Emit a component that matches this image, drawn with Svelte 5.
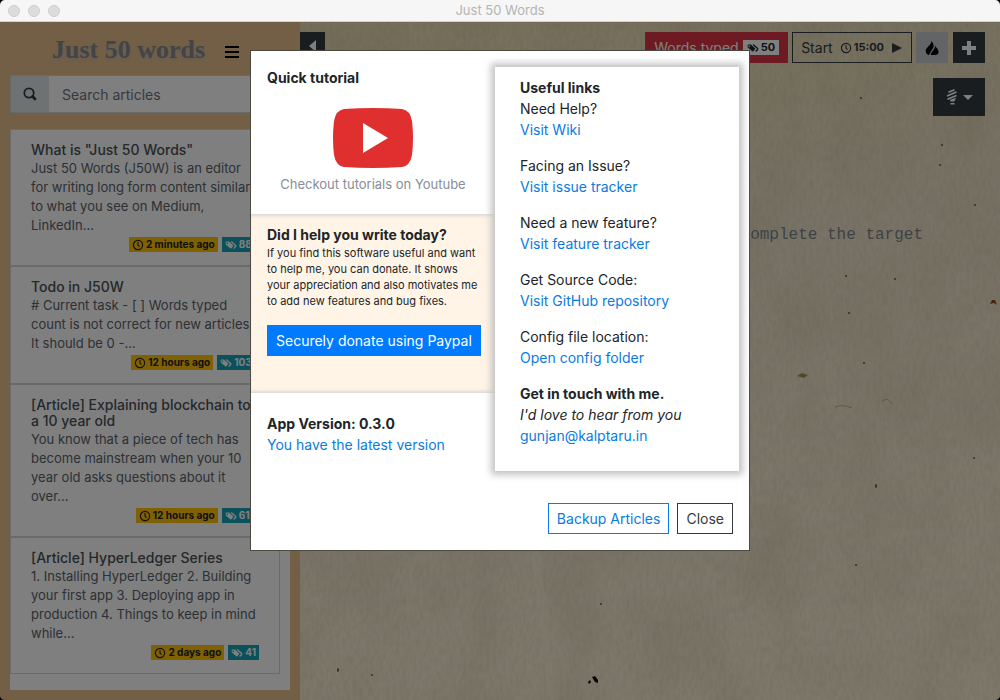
<script>
  const articles = [
    { title: 'What is "Just 50 Words"', text: 'Just 50 Words (J50W) is an editor for writing long form content similar to what you see on Medium, LinkedIn...', when: '2 minutes ago', words: '881' },
    { title: 'Todo in J50W', text: '# Current task - [ ] Words typed count is not correct for new articles. It should be 0 -...', when: '12 hours ago', words: '1031' },
    { title: '[Article] Explaining blockchain to a 10 year old', text: 'You know that a piece of tech has become mainstream when your 10 year old asks questions about it over...', when: '12 hours ago', words: '616' },
    { title: '[Article] HyperLedger Series', text: '1. Installing HyperLedger 2. Building your first app 3. Deploying app in production 4. Things to keep in mind while...', when: '2 days ago', words: '41' }
  ];
  const links = [
    ['Need Help?', 'Visit Wiki'],
    ['Facing an Issue?', 'Visit issue tracker'],
    ['Need a new feature?', 'Visit feature tracker'],
    ['Get Source Code:', 'Visit GitHub repository'],
    ['Config file location:', 'Open config folder']
  ];
  const specks = [
    [942, 145, 1], [940, 165, 1], [975, 205, 1], [846, 276, 1], [895, 279, 1], [849, 313, 1], [864, 363, 1],
    [601, 604, 1], [856, 565, 1], [338, 670, 2], [372, 675, 1], [974, 458, 1], [876, 486, 2], [861, 98, 1]
  ];
</script>

{#snippet clock()}
  <svg class="ico" viewBox="0 0 12 12" aria-hidden="true"><circle cx="6" cy="6" r="4.6" fill="none" stroke="currentColor" stroke-width="1.2" /><path d="M6 3v3.2l1.6 1.4" fill="none" stroke="currentColor" stroke-width="1.1" /></svg>
{/snippet}
{#snippet tags()}
  <svg class="ico" viewBox="0 0 12 12" aria-hidden="true"><path fill="currentColor" fill-rule="evenodd" d="M.6 3.1Q.8 2.4 1.5 2.4H4L8 6.2Q8.5 6.8 8 7.3L6.3 9.3Q5.8 9.8 5.2 9.3L.8 5.5ZM2.2 3.4a.8.8 0 1 0 .1 0Z" /><path d="M6.2 2.6 10.6 6.4Q11 7 10.6 7.5L8.600 9.5" fill="none" stroke="currentColor" stroke-width="1.3" /></svg>
{/snippet}

<div class="window">
  <header class="titlebar">
    <div class="lights"><span></span><span></span><span></span></div>
    <span>Just 50 Words</span>
  </header>

  <div class="body">
    <aside>
      <div class="brand">
        <h1>Just 50 words</h1>
        <button class="menu" aria-label="Menu"><svg width="14" height="14" viewBox="0 0 14 14"><path d="M0 2h14M0 7h14M0 12h14" stroke="#000" stroke-width="2" /></svg></button>
      </div>
      <div class="search">
        <button aria-label="Search"><svg width="14" height="14" viewBox="0 0 14 14"><circle cx="6" cy="6" r="4.7" fill="none" stroke="#343a40" stroke-width="1.8" /><path d="M9.6 9.6 12 12" stroke="#343a40" stroke-width="2.8" stroke-linecap="round" /></svg></button>
        <input type="text" placeholder="Search articles" aria-label="Search articles" />
      </div>
      <div class="list">
        {#each articles as a}
          <article>
            <h2>{a.title}</h2>
            <p>{a.text}</p>
            <div class="meta">
              <span class="badge warn">{@render clock()}{a.when}</span>
              <span class="badge info">{@render tags()}{a.words}</span>
            </div>
          </article>
        {/each}
      </div>
    </aside>

    <main>
      <svg class="paper" aria-hidden="true" width="100%" height="100%">
        <filter id="blotch" x="0" y="0" width="100%" height="100%">
          <feTurbulence type="fractalNoise" baseFrequency="0.02 0.012" numOctaves="3" seed="8" />
          <feColorMatrix values="0 0 0 0 .42  0 0 0 0 .32  0 0 0 0 .2  .25 0 0 0 -.08" />
        </filter>
        <filter id="grain" x="0" y="0" width="100%" height="100%">
          <feTurbulence type="fractalNoise" baseFrequency="0.3 0.12" numOctaves="3" seed="4" />
          <feColorMatrix values="0 0 0 0 .35  0 0 0 0 .3  0 0 0 0 .18  .26 0 0 0 -.08" />
        </filter>
        <rect width="100%" height="100%" filter="url(#blotch)" />
        <rect width="100%" height="100%" filter="url(#grain)" />
        <g transform="translate(-300 -22)">
          {#each specks as [x, y, r]}<ellipse cx={x} cy={y} rx="1" ry={r} fill="#6b5c3c" />{/each}
          <path d="m592 677 3-1 3 4v3l-3-1ZM588 682l2-2 1 2-2 2Z" fill="#0a0a05" />
          <path d="m990 304 2-4h3l2 5-3-2Z" fill="#8c4a22" />
          <path d="m797 376 5-3 6 2-4 3Z" fill="#a5904f" />
          <path d="m882 401 5-2 6 5M835 407q8-3 17 1" fill="none" stroke="#c0aa90" />
          <path d="M535 550q8 65 18 150" fill="none" stroke="#fffbe0" stroke-width="8" opacity=".2" />
        </g>
      </svg>
      <div class="toolbar">
        <button class="dark collapse" aria-label="Collapse sidebar"><svg width="8" height="14" viewBox="0 0 8 14"><path d="M7 1v12L0 7Z" fill="currentColor" /></svg></button>
        <div class="tools">
          <button class="typed">Words typed <span class="count">{@render tags()}50</span></button>
          <button class="start">Start <span class="time">{@render clock()}15:00</span><svg width="12" height="12" viewBox="0 0 12 12"><path d="M1 1v10L11 6Z" fill="currentColor" /></svg></button>
          <button class="fire" aria-label="Burn mode"><svg width="16" height="16" viewBox="0 0 16 16"><path d="M7.2 1C8 5 1.7 7 1.7 11c0 2.3 1.4 3.7 3.2 4L9.6 7C9.8 4 8.6 2 7.2 1ZM11.2 5.5C12 8 14.6 9 14.6 12c0 2-1.6 3-3.6 3H6.600C7.4 11.5 11.2 9.5 11.2 5.5Z" fill="#000" /></svg></button>
          <button class="dark plus" aria-label="New article"><svg width="14" height="14" viewBox="0 0 14 14"><path d="M7 0v14M0 7h14" stroke="currentColor" stroke-width="4" /></svg></button>
        </div>
      </div>
      <button class="dark bulb" aria-label="Theme">
        <svg width="12" height="16" viewBox="0 0 12 16"><path d="M2.5 3.2 8.5 .8M1 7 10.5 3M1.5 10.2 10.5 6.4" stroke="currentColor" stroke-width="1.6" /><path d="M3.5 11 10 8.8 9 11.2 8 12.5H5.2ZM4.5 14h4v1.6h-4Z" fill="currentColor" /></svg>
        <svg width="10" height="5" viewBox="0 0 10 5"><path d="M0 0h10L5 5Z" fill="currentColor" /></svg>
      </button>
      <p class="target">complete the target</p>
    </main>
  </div>

  <div class="backdrop">
    <div class="dialog" role="dialog" aria-modal="true" aria-label="About Just 50 Words">
      <div class="columns">
        <div class="left">
          <section class="tutorial">
            <h3>Quick tutorial</h3>
            <a href="#youtube">
              <svg width="80" height="60" viewBox="0 0 80 60"><path d="M11 1Q40-1 69 1Q77 2 79 13Q81 30 79 47Q77 58 69 59Q40 61 11 59Q3 58 1 47Q-1 30 1 13Q3 2 11 1Z" fill="#e02f2f" /><path d="M30 15v30l25-15Z" fill="#fff" /></svg>
              Checkout tutorials on Youtube
            </a>
          </section>
          <section class="donate">
            <h3>Did I help you write today?</h3>
            <p>If you find this software useful and want to help me, you can donate. It shows your appreciation and also motivates me to add new features and bug fixes.</p>
            <button>Securely donate using Paypal</button>
          </section>
          <section class="version">
            <h3>App Version: 0.3.0</h3>
            <a href="#version">You have the latest version</a>
          </section>
        </div>
        <div class="links">
          <h3>Useful links</h3>
          {#each links as [label, text]}
            <div class="entry">{label}<a href="#link">{text}</a></div>
          {/each}
          <h3>Get in touch with me.</h3>
          <em>I'd love to hear from you</em>
          <a href="#mail">gunjan@kalptaru.in</a>
        </div>
      </div>
      <footer>
        <button class="backup">Backup Articles</button>
        <button class="close">Close</button>
      </footer>
    </div>
  </div>
</div>

<style>
  :global(body) { margin: 0; background: #000; }
  .window, .window * { box-sizing: border-box; }
  .window { position: relative; display: flex; flex-direction: column; height: 100vh; overflow: hidden; border-radius: 5px; font: 14px/21px Inter, sans-serif; color: #212529; }
  button, input { font: inherit; color: inherit; border: 0; border-radius: 0; margin: 0; padding: 0; }
  h1, h2, h3, p { margin: 0; }
  a { color: #0a7be0; text-decoration: none; }
  .titlebar { position: relative; z-index: 3; flex: none; display: grid; place-items: center; height: 22px; background: #f6f6f6; border-bottom: 1px solid #d1d1d1; color: #b4b4b4; font-size: 13px; }
  .lights { position: absolute; left: 8px; top: 5px; display: flex; gap: 8px; }
  .lights span { width: 12px; height: 12px; border-radius: 50%; background: #dcdcdc; border: 1px solid #cecece; }
  .body { flex: 1; display: flex; min-height: 0; }
  aside { width: 300px; flex: none; display: flex; flex-direction: column; background: #e6be8c; padding: 10px; }
  .brand { display: flex; align-items: center; gap: 20px; padding: 0 0 8px 42px; height: 43px; flex: none; }
  h1 { font: 700 26px/36px "Liberation Serif", serif; color: #888; text-shadow: 0 2px 3px #bbb; white-space: nowrap; }
  .menu { background: none; display: flex; padding-top: 4px; }
  .search { display: flex; flex: none; height: 38px; border: 1px solid #ced4da; }
  .search button { width: 38px; background: #dfe4e6; display: grid; place-items: center; }
  .search input { flex: 1; min-width: 0; padding: 0 13px; background: #fff; }
  .search input::placeholder { color: #6c757d; opacity: 1; }
  .list { flex: 1; min-height: 0; margin-top: 16px; background: #fff; overflow: hidden; padding-right: 10px; }
  article { border: 1px solid #d5d5d5; padding: 12px 20px 13px; }
  h2 { font-size: 14px; line-height: 16px; font-weight: 500; color: #495057; padding-bottom: 1px; }
  article p { font-size: 13px; line-height: 19px; color: #5a6268; }
  .meta { display: flex; justify-content: flex-end; gap: 4px; padding-top: 2px; }
  .badge, .count, .time { display: inline-flex; align-items: center; gap: 2px; font-size: 10px; line-height: 15px; font-weight: 700; }
  .badge { padding: 0 3px; }
  .warn { background: #ffc107; }
  .info { background: #17a2b8; color: #fff; }
  .ico { width: 12px; height: 12px; flex: none; }
  main { position: relative; flex: 1; min-width: 0; background: linear-gradient(170deg, #eee0b6, #f0e6cc 35%, #fbf3d8); }
  .paper { position: absolute; inset: 0; }
  .toolbar, .bulb, .target { position: relative; }
  .toolbar { display: flex; justify-content: space-between; padding: 10px 15px 0 0; }
  .tools { display: flex; gap: 4px; }
  .dark { background: #343a40; color: #fff; }
  .collapse { width: 25px; height: 31px; }
  .typed, .start { height: 31px; display: flex; align-items: center; padding: 0 9px; gap: 4px; white-space: nowrap; }
  .typed { background: #dc3545; color: #fff; }
  .count { background: #fff; color: #212529; padding: 0 4px; font-size: 11px; }
  .start { background: none; border: 1px solid #343a40; gap: 7px; padding: 0 8px; color: #343a40; }
  .time { font-size: 11px; }
  .fire, .plus { width: 32px; height: 31px; display: grid; place-items: center; }
  .fire { background: #c6c8ca; }
  .plus { margin-left: 1px; }
  .bulb { display: flex; align-items: center; justify-content: center; gap: 5px; width: 52px; height: 38px; margin: 15px 15px 0 auto; }
  .target { font: 16px/27px "Liberation Mono", monospace; color: #7b858c; text-align: right; padding: 106px 77px 0 0; }
  .backdrop { position: absolute; inset: 22px 0 0; z-index: 2; display: flex; justify-content: center; align-items: flex-start; padding-top: 28px; background: rgb(0 0 0 / 50%); }
  .dialog { width: 500px; background: #fff; border: 1px solid #4c4940; }
  .columns { display: flex; }
  .left { flex: 1; min-width: 0; }
  .left section { padding: 16px; }
  h3 { font-size: 14px; line-height: 21px; font-weight: 700; }
  .left .tutorial { height: 163px; }
  .tutorial a { display: flex; flex-direction: column; align-items: center; gap: 6px; padding-top: 20px; font-size: 13px; color: #868e96; }
  .left .donate { height: 179px; padding-top: 10px; background: #fff4e5; box-shadow: inset 0 4px 4px -3px #ccc, inset 0 -4px 4px -3px #ccc; }
  .donate p { font-size: 11px; line-height: 16px; }
  .donate button { margin-top: 16px; height: 31px; padding: 0 9px; background: #007bff; color: #fff; white-space: nowrap; }
  .left .version { padding-top: 20px; }
  .links { width: 244px; margin: 16px 10px 0 0; padding: 10px 25px 25px; background: #fff; box-shadow: 0 0 7px 4px #c4c4c4; position: relative; display: flex; flex-direction: column; }
  .entry { display: flex; flex-direction: column; margin-bottom: 15px; }
  footer { display: flex; justify-content: flex-end; gap: 8px; padding: 32px 16px 16px; }
  footer button { height: 31px; padding: 0 8px; background: #fff; border: 1px solid; }
  .backup { color: #0a7be0; }
  .close { color: #343a40; }
</style>
